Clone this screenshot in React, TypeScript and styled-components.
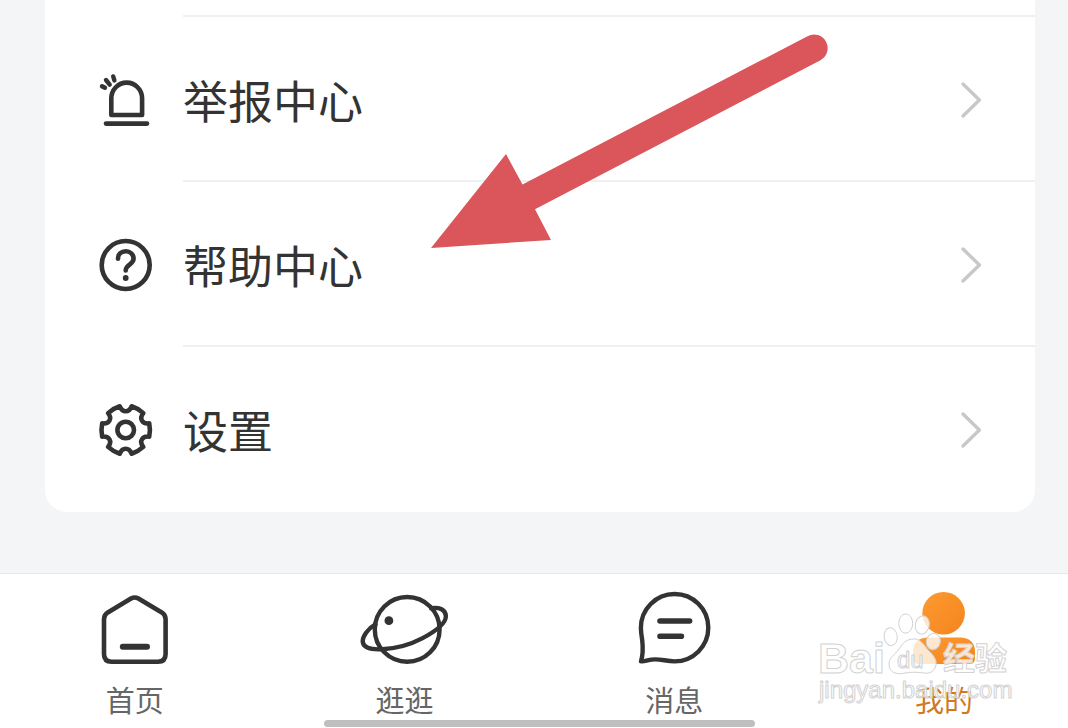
import React from "react";
import styled, { createGlobalStyle } from "styled-components";

const GlobalStyle = createGlobalStyle`
  *, *::before, *::after { box-sizing: border-box; }
  body {
    margin: 0;
    background: #f3f5f7;
    font-family: "Noto Sans CJK SC", sans-serif;
    color: #333;
  }
  a { color: inherit; text-decoration: none; }
`;

const Viewport = styled.div`
  position: relative;
  min-height: 100vh;
  overflow: hidden;
`;

const Screen = styled.div`
  display: flex;
  flex-direction: column;
  width: calc(100% + 11px);
  min-height: 100vh;
`;

const Card = styled.ul`
  list-style: none;
  margin: 0 44px 61px 45px;
  padding: 15px 0 2px;
  background: #fff;
  border-radius: 0 0 22px 22px;
`;

const Row = styled.a`
  display: flex;
  align-items: stretch;
  gap: 29px;
  height: 165px;
  padding-left: 53px;
`;

const RowIcon = styled.span`
  display: flex;
  align-items: center;
  padding-top: 4px;
`;

const RowBody = styled.span`
  flex: 1;
  display: flex;
  align-items: center;
  justify-content: space-between;
  padding: 2px 52px 0 0;
  border-top: 2px solid #eeeff0;
`;

const RowLabel = styled.span`
  font-size: 45px;
  line-height: 60px;
`;

const NavBar = styled.nav`
  margin-top: auto;
  display: flex;
  flex-direction: column;
  align-items: center;
  padding: 16px 0 1px;
  background: #fff;
  border-top: 1px solid #e6e8ea;
`;

const Tabs = styled.div`
  display: grid;
  grid-template-columns: repeat(4, 1fr);
  width: 100%;
`;

const Tab = styled.a<{ $active?: boolean }>`
  display: flex;
  flex-direction: column;
  align-items: center;
  gap: 10px;
  padding-bottom: 2px;
  font-size: 29px;
  line-height: 38px;
  color: ${(p) => (p.$active ? "#cf7a22" : "#666")};
`;

const HomeIndicator = styled.div`
  width: 40%;
  height: 7px;
  border-radius: 4px;
  background: #bfbfbf;
`;

const Arrow = styled.svg`
  position: absolute;
  left: 431px;
  top: 34px;
  pointer-events: none;
`;

const Watermark = styled.svg`
  position: absolute;
  right: 53px;
  bottom: 16px;
  pointer-events: none;
`;

const Stroked = styled.svg`
  display: block;
  fill: none;
  stroke: #333;
  stroke-linecap: round;
  stroke-linejoin: round;
`;

const ReportIcon = () => (
  <Stroked width="56" height="56" viewBox="0 0 56 56" strokeWidth="4.6" aria-hidden>
    <path d="M13.3 43V26.5a15.4 15.9 0 0 1 30.8 0V43z" />
    <path d="M8 51.6H49" />
    <path d="M4 14.2l3 1.6M8 8l3.7 4.6M15.2 4.4l1.2 4" strokeWidth="4.4" />
  </Stroked>
);

const HelpIcon = () => (
  <Stroked width="56" height="56" viewBox="0 0 56 56" strokeWidth="4.6" aria-hidden>
    <circle cx="27.7" cy="28" r="24" />
    <path d="M20 21.8c0-4.6 3.4-7.6 7.8-7.6s7.8 3.2 7.8 7.4c0 6-7.9 6-7.9 11.8" />
    <circle cx="27.7" cy="41" r="2.9" fill="#333" stroke="none" />
  </Stroked>
);

const polar = (radius: number, degrees: number) => {
  const a = (degrees * Math.PI) / 180;
  return `${(27.7 + radius * Math.sin(a)).toFixed(1)} ${(28 - radius * Math.cos(a)).toFixed(1)}`;
};

// Six teeth, each followed by a rounded notch.
const gearPath =
  `M${polar(24.4, 14)}` +
  [0, 60, 120, 180, 240, 300]
    .map(
      (a) =>
        `A32 32 0 0 1 ${polar(24.4, a + 46)}` +
        `C${polar(17.4, a + 49)} ${polar(17.4, a + 71)} ${polar(24.4, a + 74)}`
    )
    .join("") +
  "Z";

const SettingsIcon = () => (
  <Stroked width="56" height="56" viewBox="0 0 56 56" strokeWidth="4.6" aria-hidden>
    <path d={gearPath} />
    <circle cx="27.7" cy="28" r="8.3" />
  </Stroked>
);

const Chevron = () => (
  <Stroked width="24" height="40" viewBox="0 0 24 40" strokeWidth="3.4" aria-hidden>
    <path d="M4 4l16.4 16L4 36" stroke="#c8c8c8" />
  </Stroked>
);

const HomeIcon = () => (
  <Stroked width="90" height="80" viewBox="0 0 90 80" strokeWidth="4.6" aria-hidden>
    <path d="M41 8.6Q44.7 6.4 48.4 8.6L71.8 22.4Q75.6 24.8 75.6 29V64Q75.6 71.7 68 71.7H21.6Q14 71.7 14 64V29Q14 24.8 17.8 22.4Z" />
    <path d="M32.8 56.7H57" strokeWidth="6" />
  </Stroked>
);

const PlanetIcon = () => (
  <Stroked width="90" height="80" viewBox="0 0 90 80" strokeWidth="4.4" aria-hidden>
    <circle cx="47.2" cy="39.4" r="32.4" />
    <path d="M15.4 34.4C8.2 38.4 2 46.6 2.8 52.2C3.9 58.8 12.6 59.8 22.6 59.2C33.6 58.6 48.6 55.5 62.1 48.4C75.6 41.2 86.6 33.4 85.8 25.6C85.2 19.3 78.9 17 71.1 18.2" />
    <circle cx="28.9" cy="30.7" r="4.4" fill="#333" stroke="none" />
  </Stroked>
);

const MessageIcon = () => (
  <Stroked width="90" height="80" viewBox="0 0 90 80" strokeWidth="4.4" aria-hidden>
    <path d="M12 71.4C14.3 64 14.1 58 13.2 50C12.5 46 11.9 42 11.9 37.8A33.7 33.7 0 1 1 45.7 71.4C36.7 71.4 30.7 68.4 22.7 69.6C18.7 70.2 15.7 71.6 12 71.4Z" />
    <path d="M31 31H60.6M31 46.3H52.4" strokeWidth="5.6" />
  </Stroked>
);

const ProfileIcon = () => (
  <Stroked width="90" height="80" viewBox="0 0 90 80" aria-hidden>
    <defs>
      <linearGradient id="profile" x1="0" y1="0" x2="1" y2="1">
        <stop offset="0" stopColor="#fd9a30" />
        <stop offset="1" stopColor="#f5841f" />
      </linearGradient>
    </defs>
    <g fill="url(#profile)" stroke="none">
      <circle cx="44.6" cy="23.2" r="21.3" />
      <path d="M28 47.4H62Q76 48.5 76 62V68Q76 74 70 74H20Q14 74 14 68V62Q14 48.5 28 47.4Z" />
    </g>
  </Stroked>
);

const rows = [
  { label: "举报中心", Icon: ReportIcon },
  { label: "帮助中心", Icon: HelpIcon },
  { label: "设置", Icon: SettingsIcon },
];

const tabs = [
  { label: "首页", Icon: HomeIcon },
  { label: "逛逛", Icon: PlanetIcon },
  { label: "消息", Icon: MessageIcon },
  { label: "我的", Icon: ProfileIcon, active: true },
];

export default function App() {
  return (
    <Viewport>
      <GlobalStyle />
      <Screen>
        <Card>
          {rows.map(({ label, Icon }) => (
            <li key={label}>
              <Row href="#">
                <RowIcon>
                  <Icon />
                </RowIcon>
                <RowBody>
                  <RowLabel>{label}</RowLabel>
                  <Chevron />
                </RowBody>
              </Row>
            </li>
          ))}
        </Card>
        <NavBar>
          <Tabs>
            {tabs.map(({ label, Icon, active }) => (
              <Tab key={label} href="#" $active={active}>
                <Icon />
                {label}
              </Tab>
            ))}
          </Tabs>
          <HomeIndicator />
        </NavBar>
      </Screen>

      <Arrow width="400" height="216" viewBox="0 0 400 216" aria-hidden>
        <path
          d="M0 214L75 120L91.5 150.5L376.5 2.2A13.5 13.5 0 0 1 389.5 26.2L104 175.3L120 206Z"
          fill="#da565a"
        />
      </Arrow>

      <Watermark width="200" height="100" viewBox="0 0 200 100" aria-hidden>
        <g
          fill="#fff"
          fillOpacity="0.78"
          stroke="#d2d2d2"
          strokeWidth="1"
          strokeLinejoin="round"
        >
          <ellipse cx="75.7" cy="24.7" rx="6.5" ry="9" transform="rotate(-8 75.7 24.7)" />
          <ellipse cx="90.7" cy="11.5" rx="7" ry="9.6" />
          <ellipse cx="107.3" cy="13" rx="7" ry="9.2" transform="rotate(12 107.3 13)" />
          <ellipse cx="118.3" cy="29.5" rx="7" ry="8.2" transform="rotate(12 118.3 29.5)" />
          <path d="M99 27C106 27 109 33 113 38C118 43 122 47 121 53C120 59 115 62 109 61C102 60 96 60 90 61C82 63 74 61 74 52C74 45 80 43 84 37C88 31 91 27 99 27Z" />
          <g fontFamily="Liberation Sans, sans-serif">
            <text x="3" y="61" fontSize="43" fontWeight="700">Bai</text>
            <text x="82" y="56" fontSize="24">du</text>
            <text x="4" y="86" fontSize="24">jingyan.baidu.com</text>
          </g>
          <text x="128" y="58" fontSize="32" fontWeight="700" fontFamily="Noto Sans CJK SC, sans-serif">经验</text>
        </g>
      </Watermark>
    </Viewport>
  );
}
